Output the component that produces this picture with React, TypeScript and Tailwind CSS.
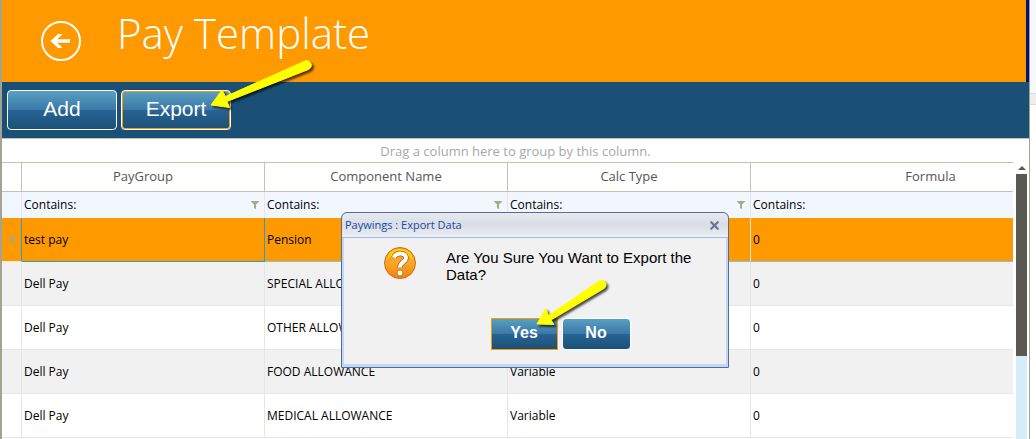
import { X } from "lucide-react";
import { FaFilter } from "react-icons/fa";

type PayComponent = {
  group: string;
  name: string;
  calcType?: string;
  formula: string;
};

const columns = ["PayGroup", "Component Name", "Calc Type", "Formula"];

const rows: PayComponent[] = [
  { group: "test pay", name: "Pension", formula: "0" },
  { group: "Dell Pay", name: "SPECIAL ALLOWANCE", formula: "0" },
  { group: "Dell Pay", name: "OTHER ALLOWANCE", formula: "0" },
  { group: "Dell Pay", name: "FOOD ALLOWANCE", calcType: "Variable", formula: "0" },
  { group: "Dell Pay", name: "MEDICAL ALLOWANCE", calcType: "Variable", formula: "0" },
];

const glossy =
  "bg-[linear-gradient(#5aa2c4_0%,#3a78a6_50%,#286394_51%,#1a5076_100%)] bg-origin-border text-white font-['Liberation_Sans',sans-serif]";

const Header = () => (
  <header className="flex h-[82px] border-r-3 border-[#00117a] bg-[#ff9900] pl-[39px]">
    <button aria-label="Back" className="mt-[21px] h-10 w-10">
      <svg viewBox="0 0 40 40" className="h-10 w-10" fill="none" stroke="#fff">
        <circle cx="20" cy="20" r="19" strokeWidth="2" />
        <path d="M11.500 20H29" strokeWidth="3.500" />
        <path d="M17 13H21.500L14.500 20L21.500 27H17L9.500 20Z" fill="#fff" stroke="none" />
      </svg>
    </button>
    <h1 className="ml-9 mt-2 text-[42px] leading-[50px] font-light text-white">
      Pay Template
    </h1>
  </header>
);

const Toolbar = () => (
  <div className="flex h-14 gap-1 bg-[#1a5076] px-[5px] py-2">
    <button className={`h-10 w-[110px] rounded-sm border border-white pb-[2px] text-[21px] ${glossy}`}>
      Add
    </button>
    <button
      className={`h-10 w-[110px] rounded-sm border border-white pb-[2px] text-[21px] inset-ring inset-ring-[#ff9900] ${glossy}`}
    >
      Export
    </button>
  </div>
);

const Grid = () => (
  <table className="w-[1109px] table-fixed border-separate border-spacing-0 text-xs text-black">
    <colgroup>
      <col className="w-5" />
      <col className="w-[243px]" />
      <col className="w-[243px]" />
      <col className="w-[243px]" />
      <col className="w-[360px]" />
    </colgroup>
    <thead>
      <tr className="h-[30px] text-[13px] text-[#555]">
        <th className="border-y border-r border-[#c3c3b1]" />
        {columns.map((column) => (
          <th key={column} className="border-y border-r border-[#c3c3b1] font-normal">
            {column}
          </th>
        ))}
      </tr>
      <tr className="h-[26px] bg-[#f2f7ff]">
        <td className="border-r border-[#e6e6e6]" />
        {columns.map((column) => (
          <td key={column} className="border-r border-[#e6e6e6] px-[2px]">
            <div className="flex items-center justify-between pr-[3px]">
              Contains:
              <button aria-label={`Filter ${column}`} className="text-[#9fae84]">
                <FaFilter size={8} />
              </button>
            </div>
          </td>
        ))}
      </tr>
    </thead>
    <tbody>
      {rows.map((row, i) =>
        i === 0 ? (
          <tr key={i} className="h-11 bg-[#ff9900]">
            <td className="border-r border-b border-r-[#2c9ccc] border-b-[#e6e6e6]">
              <svg viewBox="0 0 6 9" className="ml-2 h-[9px] w-[6px]" fill="#a9a878">
                <path d="M0 0L6 4.500L0 9Z" />
              </svg>
            </td>
            <td className="border-r border-b border-[#2c9ccc] px-[2px]">{row.group}</td>
            <td className="border-r border-b border-r-[#e6e6e6] border-b-[#7cc4e6] px-[2px]">{row.name}</td>
            <td className="border-r border-b border-r-[#e6e6e6] border-b-[#7cc4e6] px-[2px]">{row.calcType}</td>
            <td className="border-b border-[#7cc4e6] px-[2px]">{row.formula}</td>
          </tr>
        ) : (
          <tr key={i} className="h-11 odd:bg-white even:bg-[#f1f1f1]">
            <td className="border-r border-b border-[#e6e6e6]" />
            {[row.group, row.name, row.calcType, row.formula].map((value, j) => (
              <td key={j} className="border-r border-b border-[#e6e6e6] px-[2px]">
                {value}
              </td>
            ))}
          </tr>
        )
      )}
    </tbody>
  </table>
);

const Scrollbar = () => (
  <div className="mr-[2px] ml-[3px] flex w-[11px] flex-col items-center">
    <svg viewBox="0 0 8 4" className="mt-1 mb-1 h-1 w-2 shrink-0" fill="#595952">
      <path d="M4 0L8 4H0Z" />
    </svg>
    <div className="h-[182px] w-full shrink-0 bg-[#595952]" />
    <div className="w-full flex-1 bg-[#d5ecf9]" />
  </div>
);

const QuestionIcon = () => (
  <svg viewBox="0 0 34 32" className="mt-px h-8 w-[34px] shrink-0">
    <defs>
      <linearGradient id="ball" x1="0" y1="0" x2="0" y2="1">
        <stop offset="0" stopColor="#f9a51c" />
        <stop offset="0.5" stopColor="#fba62d" />
        <stop offset="1" stopColor="#f08200" />
      </linearGradient>
    </defs>
    <circle cx="17" cy="16" r="15.500" fill="url(#ball)" stroke="#d2691e" />
    <path d="M4 13C5 6 10 2 17 2C24 2 29 6 30 13C25 8 21 7 17 7C12 7 8 8 4 13Z" fill="#ffd500" />
    <path
      d="M11 10.500C12 7.500 14.500 6.500 17.500 6.500C21 6.500 23 8.500 23 11C23 15 17 15 17 20.500"
      fill="none"
      stroke="#b85c14"
      strokeWidth="5.500"
    />
    <path
      d="M11 10.500C12 7.500 14.500 6.500 17.500 6.500C21 6.500 23 8.500 23 11C23 15 17 15 17 20.500"
      fill="none"
      stroke="#fff"
      strokeWidth="4"
    />
    <circle cx="17" cy="26" r="2.900" fill="#fff" stroke="#b85c14" strokeWidth="0.700" />
  </svg>
);

const ExportDialog = () => (
  <div
    role="dialog"
    aria-labelledby="dialog-title"
    className="absolute top-[212px] left-[341px] w-[388px] rounded-t-md border border-[#5b6b90] bg-[#bfd7fb]"
  >
    <div className="flex h-[25px] items-center justify-between rounded-t-md border-b border-[#9bbdf0] bg-linear-to-b from-[#e6eaf0] via-[#d8dde6] to-[#eceff3] pr-[7px] pl-[3px]">
      <h2 id="dialog-title" className="text-[11px] text-[#1c479c]">
        Paywings : Export Data
      </h2>
      <button aria-label="Close" className="text-[#66738c]">
        <X size={13} strokeWidth={4} />
      </button>
    </div>
    <div className="mx-[2px] mb-[3px] bg-[#f1f1f1] pt-2 pb-[14px] font-['Liberation_Sans',sans-serif]">
      <div className="flex h-[72px] gap-[29px] pr-4 pl-[39px]">
        <QuestionIcon />
        <p className="pt-[3px] text-[15px] leading-[17px] text-black">
          Are You Sure You Want to Export the Data?
        </p>
      </div>
      <div className="flex justify-center gap-1 pl-[51px]">
        <button className={`h-8 w-[67px] border border-[#ff9900] pb-[2px] text-base font-bold ${glossy}`}>
          Yes
        </button>
        <button className={`h-8 w-[69px] rounded-sm border border-white pb-[2px] text-base font-bold ${glossy}`}>
          No
        </button>
      </div>
    </div>
  </div>
);

// Yellow callout arrows pointing at the Export and Yes buttons
const Pointers = () => (
  <svg
    width="640"
    height="340"
    className="pointer-events-none absolute top-0 left-0 drop-shadow-[2px_2px_1px_rgba(0,0,0,0.7)]"
    fill="#ffff00"
    stroke="#ffff00"
    strokeLinejoin="round"
  >
    <path d="M211 105L222 90L225.500 96.500L305 61A4.500 4.500 0 0 1 308.500 69.500L227 101.500L229.500 107.500Z" />
    <path d="M537 324L545.500 308.500L548.500 315.500L599 281A4.500 4.500 0 0 1 604 288.500L551 320L554 324.500Z" />
  </svg>
);

export default function App() {
  return (
    <div className="relative flex h-screen overflow-hidden bg-white font-['Open_Sans','Noto_Sans',sans-serif]">
      <main className="flex min-w-0 flex-1 flex-col border-r border-l-2 border-r-[#a3a394] border-l-[#a3a394]">
        <Header />
        <Toolbar />
        <section className="flex min-h-0 flex-1 flex-col border-t border-[#c3c3b1]">
          <p className="h-[23px] text-center text-[13px] leading-6 text-[#a8a8a8]">
            Drag a column here to group by this column.
          </p>
          <div className="flex min-h-0 flex-1">
            <div className="min-w-0 flex-1 overflow-hidden">
              <Grid />
            </div>
            <Scrollbar />
          </div>
        </section>
      </main>
      <aside className="w-[6px]">
        <div className="h-[93px] bg-[#f8f8f8]" />
        <div className="h-3 border-y border-[#dcdcdc] bg-[#eeeeee]" />
      </aside>
      <ExportDialog />
      <Pointers />
    </div>
  );
}
